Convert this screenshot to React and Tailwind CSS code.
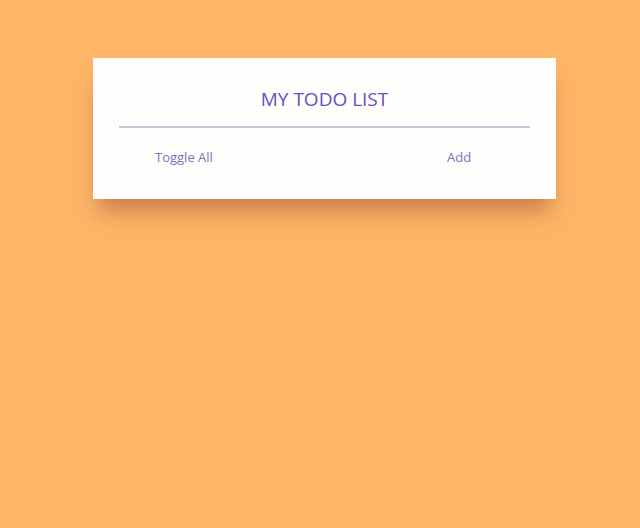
export default function App() {
  return (
    <div className="min-h-[528px] w-full bg-[#fcb666] pt-[58px]" style={{ fontFamily: '"Open Sans", "Noto Sans", sans-serif' }}>
      <div className="ml-[93px] w-[463px] h-[141px] bg-[#fefefc] shadow-[0_18px_20px_-6px_rgba(170,80,60,0.55)] flex flex-col">
        <h1 className="text-center text-[19px] font-medium leading-[28px] text-[#6a4fc0] mt-[27px] mb-0">MY TODO LIST</h1>
        <div className="mx-[26px] mt-[13px] h-[2px] bg-[#d0c4dc]"></div>
        <div className="flex mt-[20px] text-[13px] leading-[18px] text-[#7c72b8]">
          <button className="ml-[62px] w-[60px] text-left">Toggle All</button>
          <button className="ml-[232px] w-[40px] text-left">Add</button>
        </div>
      </div>
    </div>
  );
}
